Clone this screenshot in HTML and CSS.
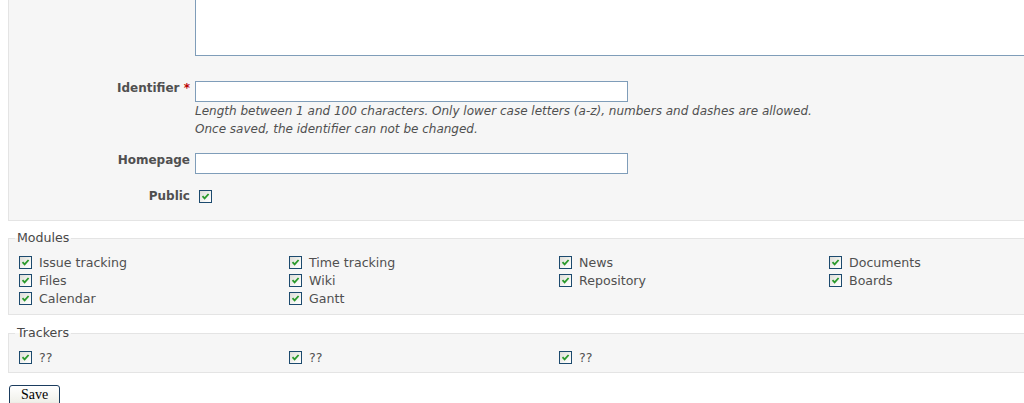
FILE: index.html
```html
<!DOCTYPE html>
<html>
<head>
<meta charset="utf-8">
<link rel="stylesheet" href="styles.css">
</head>
<body>
<div class="page">
  <div class="box tabular">
    <div class="row row-desc">
      <span class="label"></span>
      <textarea class="desc"></textarea>
    </div>
    <div class="row row-ident">
      <label class="label">Identifier <span class="required">*</span></label>
      <div class="field">
        <input type="text" class="text">
        <em class="info">Length between 1 and 100 characters. Only lower case letters (a-z), numbers and dashes are allowed.<br>Once saved, the identifier can not be changed.</em>
      </div>
    </div>
    <div class="row row-home">
      <label class="label">Homepage</label>
      <input type="text" class="text">
    </div>
    <div class="row row-public">
      <label class="label">Public</label>
      <span class="cb"><svg viewBox="0 0 11 11" width="11" height="11"><path d="M2.5 5.2 L4.6 7.4 L8.6 3" fill="none" stroke="#2a9a2a" stroke-width="1.8"/></svg></span>
    </div>
  </div>

  <fieldset class="box group modules">
    <legend>Modules</legend>
    <div class="grid">
      <label class="opt"><span class="cb"><svg viewBox="0 0 11 11" width="11" height="11"><path d="M2.5 5.2 L4.6 7.4 L8.6 3" fill="none" stroke="#2a9a2a" stroke-width="1.8"/></svg></span>Issue tracking</label>
      <label class="opt"><span class="cb"><svg viewBox="0 0 11 11" width="11" height="11"><path d="M2.5 5.2 L4.6 7.4 L8.6 3" fill="none" stroke="#2a9a2a" stroke-width="1.8"/></svg></span>Time tracking</label>
      <label class="opt"><span class="cb"><svg viewBox="0 0 11 11" width="11" height="11"><path d="M2.5 5.2 L4.6 7.4 L8.6 3" fill="none" stroke="#2a9a2a" stroke-width="1.8"/></svg></span>News</label>
      <label class="opt"><span class="cb"><svg viewBox="0 0 11 11" width="11" height="11"><path d="M2.5 5.2 L4.6 7.4 L8.6 3" fill="none" stroke="#2a9a2a" stroke-width="1.8"/></svg></span>Documents</label>
      <label class="opt"><span class="cb"><svg viewBox="0 0 11 11" width="11" height="11"><path d="M2.5 5.2 L4.6 7.4 L8.6 3" fill="none" stroke="#2a9a2a" stroke-width="1.8"/></svg></span>Files</label>
      <label class="opt"><span class="cb"><svg viewBox="0 0 11 11" width="11" height="11"><path d="M2.5 5.2 L4.6 7.4 L8.6 3" fill="none" stroke="#2a9a2a" stroke-width="1.8"/></svg></span>Wiki</label>
      <label class="opt"><span class="cb"><svg viewBox="0 0 11 11" width="11" height="11"><path d="M2.5 5.2 L4.6 7.4 L8.6 3" fill="none" stroke="#2a9a2a" stroke-width="1.8"/></svg></span>Repository</label>
      <label class="opt"><span class="cb"><svg viewBox="0 0 11 11" width="11" height="11"><path d="M2.5 5.2 L4.6 7.4 L8.6 3" fill="none" stroke="#2a9a2a" stroke-width="1.8"/></svg></span>Boards</label>
      <label class="opt"><span class="cb"><svg viewBox="0 0 11 11" width="11" height="11"><path d="M2.5 5.2 L4.6 7.4 L8.6 3" fill="none" stroke="#2a9a2a" stroke-width="1.8"/></svg></span>Calendar</label>
      <label class="opt"><span class="cb"><svg viewBox="0 0 11 11" width="11" height="11"><path d="M2.5 5.2 L4.6 7.4 L8.6 3" fill="none" stroke="#2a9a2a" stroke-width="1.8"/></svg></span>Gantt</label>
    </div>
  </fieldset>

  <fieldset class="box group trackers">
    <legend>Trackers</legend>
    <div class="grid">
      <label class="opt"><span class="cb"><svg viewBox="0 0 11 11" width="11" height="11"><path d="M2.5 5.2 L4.6 7.4 L8.6 3" fill="none" stroke="#2a9a2a" stroke-width="1.8"/></svg></span>??</label>
      <label class="opt"><span class="cb"><svg viewBox="0 0 11 11" width="11" height="11"><path d="M2.5 5.2 L4.6 7.4 L8.6 3" fill="none" stroke="#2a9a2a" stroke-width="1.8"/></svg></span>??</label>
      <label class="opt"><span class="cb"><svg viewBox="0 0 11 11" width="11" height="11"><path d="M2.5 5.2 L4.6 7.4 L8.6 3" fill="none" stroke="#2a9a2a" stroke-width="1.8"/></svg></span>??</label>
    </div>
  </fieldset>

  <button class="save">Save</button>
</div>
</body>
</html>
```

FILE: styles.css
```css
html, body {
  margin: 0;
  padding: 0;
  background: #fff;
  overflow: hidden;
}
body {
  font-family: "DejaVu Sans", Verdana, sans-serif;
  font-size: 12px;
  color: #484848;
}
.page {
  padding-left: 8px;
  width: 1100px;
}
.box {
  background: #f6f6f6;
  border: 1px solid #e4e4e4;
  box-sizing: border-box;
}
.tabular {
  margin-top: -40px;
  padding-bottom: 17px;
}
.row {
  display: flex;
  align-items: flex-start;
}
.label {
  width: 181px;
  flex: none;
  text-align: right;
  font-weight: bold;
  color: #505050;
  margin-right: 5px;
}
.required {
  color: #bb0000;
}
textarea.desc {
  width: 900px;
  height: 95px;
  margin: 0;
  border: 1px solid #7f9db9;
  background: #fff;
  box-sizing: border-box;
  resize: none;
  display: block;
}
.row-desc {
  margin-bottom: 25px;
}
.row-ident .label,
.row-home .label {
  line-height: 21px;
  margin-top: -3px;
}
input.text {
  width: 433px;
  height: 21px;
  box-sizing: border-box;
  border: 1px solid #7f9db9;
  background: #fff;
  margin: 0;
  padding: 0;
  display: block;
}
.field {
  display: flex;
  flex-direction: column;
}
.info {
  display: block;
  font-size: 12px;
  line-height: 18px;
  color: #505050;
}
.row-home {
  margin-top: 15px;
}
.row-public {
  margin-top: 15px;
  align-items: center;
}
.row-public .label {
  margin-right: 9px;
  line-height: 14px;
}
.cb {
  display: inline-flex;
  align-items: center;
  justify-content: center;
  width: 13px;
  height: 13px;
  box-sizing: border-box;
  border: 1px solid #1c4a6e;
  background: linear-gradient(135deg, #dcdcd6, #f8f8f6 70%, #fff);
  flex: none;
}
.group {
  margin: 10px 0 0 0;
  padding: 0 0 7px 10px;
  border-left: 1px solid #e4e4e4;
  border-right: none;
  min-width: 0;
}
.group legend {
  margin-left: -4px;
  padding: 0 2px;
  color: #484848;
  font-size: 12.6px;
  line-height: 14px;
}
.grid {
  display: grid;
  grid-template-columns: repeat(4, 270px);
  margin-top: 8px;
}
.opt {
  display: flex;
  align-items: center;
  height: 18px;
  gap: 7px;
  color: #505050;
  font-size: 12.6px;
}
.trackers {
  margin-top: 11px;
  padding-bottom: 6px;
}
.trackers .grid {
  margin-top: 8px;
}
.save {
  display: block;
  margin: 12px 0 0 1px;
  font-family: "Liberation Serif", "Times New Roman", serif;
  font-size: 14px;
  font-weight: normal;
  color: #000;
  width: 51px;
  height: 22px;
  padding: 0 0 2px 0;
  border: 1px solid #1b3c5e;
  border-radius: 3px;
  background: linear-gradient(#ffffff, #f0f0ea 80%, #d8d8d0);
}
```
